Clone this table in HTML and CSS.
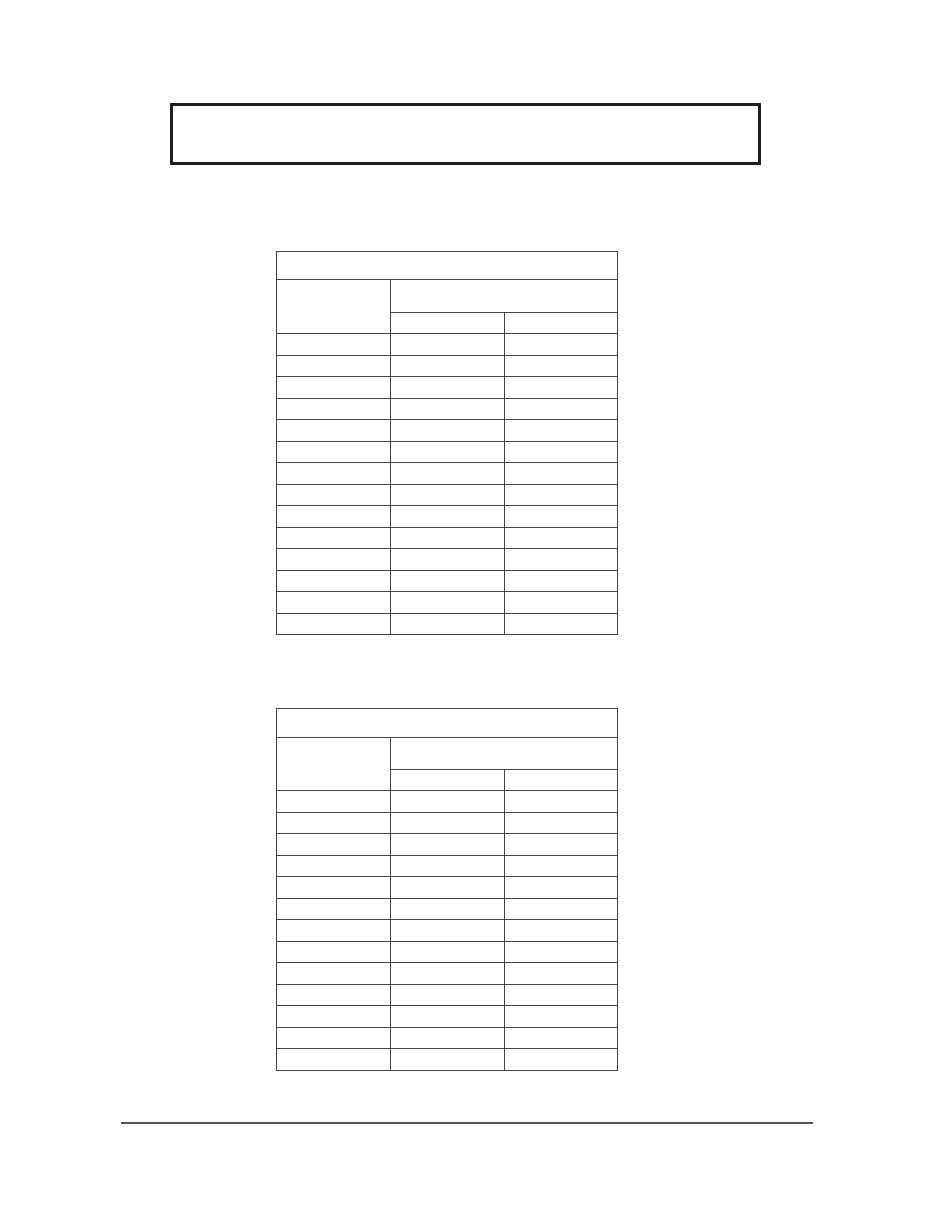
FILE: index.html
```html
<!DOCTYPE html>
<html lang="en">
<head>
<meta charset="utf-8">
<title>Form</title>
<link rel="stylesheet" href="styles.css">
</head>
<body>
<div class="page">
  <div class="title-box"></div>

  <table class="sheet sheet-one">
    <colgroup><col class="c1"><col class="c2"><col class="c3"></colgroup>
    <thead>
      <tr class="cap"><th colspan="3"></th></tr>
      <tr class="head-top"><th rowspan="2"></th><th colspan="2"></th></tr>
      <tr class="head-sub"><th></th><th></th></tr>
    </thead>
    <tbody>
      <tr><td></td><td></td><td></td></tr>
      <tr><td></td><td></td><td></td></tr>
      <tr><td></td><td></td><td></td></tr>
      <tr><td></td><td></td><td></td></tr>
      <tr><td></td><td></td><td></td></tr>
      <tr><td></td><td></td><td></td></tr>
      <tr><td></td><td></td><td></td></tr>
      <tr><td></td><td></td><td></td></tr>
      <tr><td></td><td></td><td></td></tr>
      <tr><td></td><td></td><td></td></tr>
      <tr><td></td><td></td><td></td></tr>
      <tr><td></td><td></td><td></td></tr>
      <tr><td></td><td></td><td></td></tr>
      <tr><td></td><td></td><td></td></tr>
    </tbody>
  </table>

  <table class="sheet sheet-two">
    <colgroup><col class="c1"><col class="c2"><col class="c3"></colgroup>
    <thead>
      <tr class="cap"><th colspan="3"></th></tr>
      <tr class="head-top"><th rowspan="2"></th><th colspan="2"></th></tr>
      <tr class="head-sub"><th></th><th></th></tr>
    </thead>
    <tbody>
      <tr><td></td><td></td><td></td></tr>
      <tr><td></td><td></td><td></td></tr>
      <tr><td></td><td></td><td></td></tr>
      <tr><td></td><td></td><td></td></tr>
      <tr><td></td><td></td><td></td></tr>
      <tr><td></td><td></td><td></td></tr>
      <tr><td></td><td></td><td></td></tr>
      <tr><td></td><td></td><td></td></tr>
      <tr><td></td><td></td><td></td></tr>
      <tr><td></td><td></td><td></td></tr>
      <tr><td></td><td></td><td></td></tr>
      <tr><td></td><td></td><td></td></tr>
      <tr><td></td><td></td><td></td></tr>
    </tbody>
  </table>

  <div class="footer-rule"></div>
</div>
</body>
</html>
```

FILE: styles.css
```css
html, body {
  margin: 0;
  padding: 0;
  background: #ffffff;
  font-family: "Liberation Sans", Arial, sans-serif;
}

.page {
  padding-top: 103px;
  width: 935px;
  height: 1210px;
  box-sizing: border-box;
}

.title-box {
  margin-left: 170px;
  width: 591px;
  height: 62px;
  box-sizing: border-box;
  border: 3px solid #1e1e1e;
}

.sheet {
  border-collapse: collapse;
  table-layout: fixed;
  margin-left: 276px;
  border: 1px solid #444444;
}

.sheet .c1 { width: 114px; }
.sheet .c2 { width: 114px; }
.sheet .c3 { width: 113px; }

.sheet th,
.sheet td {
  border: 1px solid #444444;
  padding: 0;
}

.sheet-one { margin-top: 86px; }
.sheet-two { margin-top: 73px; }

.sheet-one .cap { height: 28px; }
.sheet-one .head-top { height: 33px; }
.sheet-one .head-sub { height: 21px; }

.sheet-two .cap { height: 29px; }
.sheet-two .head-top { height: 32px; }
.sheet-two .head-sub { height: 21px; }

.sheet tbody tr { height: 21px; }
.sheet tbody tr:nth-child(odd) { height: 22px; }

.footer-rule {
  margin-top: 51px;
  margin-left: 121px;
  width: 692px;
  height: 0;
  border-top: 2px solid #555555;
}
```
